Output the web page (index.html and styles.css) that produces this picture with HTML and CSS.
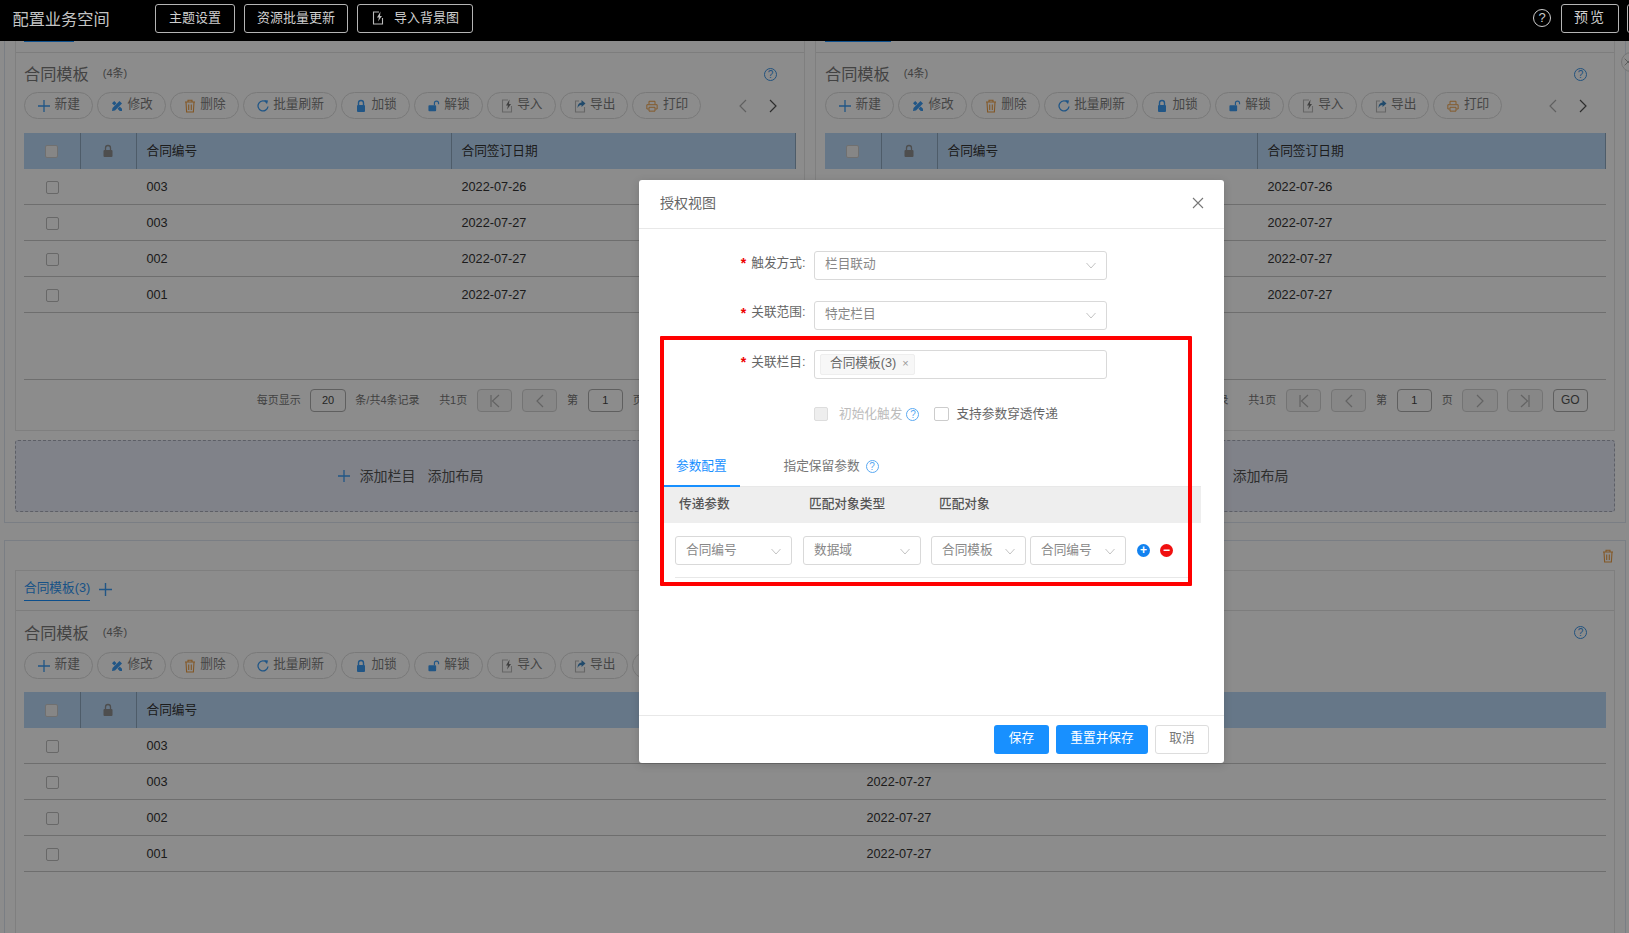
FILE: index.html
```html
<!DOCTYPE html>
<html lang="zh-CN">
<head>
<meta charset="utf-8">
<title>配置业务空间</title>
<link rel="stylesheet" href="styles.css">
</head>
<body>
<svg class="sprite" xmlns="http://www.w3.org/2000/svg">
  <symbol id="i-plus" viewBox="0 0 12 12"><path d="M6 0v12M0 6h12" fill="none" stroke="currentColor" stroke-width="1.3"/></symbol>
  <symbol id="i-edit" viewBox="0 0 12 12"><path d="M1 3.2L3.200 1l2.300 2.300-2.200 2.200zM6.500 8.700l2.200-2.200L11 8.800V11H8.800z" fill="currentColor"/><path d="M1 11l.5-3L8.500 1l2.500 2.500-7 7z" fill="currentColor"/></symbol>
  <symbol id="i-trash" viewBox="0 0 12 14"><path d="M1 3h10M4 3V1.2h4V3M2 3l.6 10h6.8L10 3M4.7 5.5v5.5M7.3 5.5v5.5" fill="none" stroke="currentColor" stroke-width="1.1"/></symbol>
  <symbol id="i-refresh" viewBox="0 0 12 14"><path d="M9.8 3.6A5 5 0 1 0 11 7.5" fill="none" stroke="currentColor" stroke-width="1.3"/><path d="M7 1l4 .6-1 3.6z" fill="currentColor"/></symbol>
  <symbol id="i-lock" viewBox="0 0 12 14"><path d="M3.5 6V4a2.5 2.5 0 0 1 5 0v2" fill="none" stroke="currentColor" stroke-width="1.4"/><rect x="2" y="6" width="8" height="7" rx="1" fill="currentColor"/></symbol>
  <symbol id="i-unlock" viewBox="0 0 14 14"><path d="M7.5 6V3.6a2.4 2.4 0 0 1 4.8 0V5" fill="none" stroke="currentColor" stroke-width="1.4"/><rect x="0.5" y="6" width="9" height="7" rx="1" fill="currentColor"/></symbol>
  <symbol id="i-import" viewBox="0 0 12 14"><path d="M7 1H1.5v12h9V7" fill="none" stroke="#bbb" stroke-width="1.1"/><path d="M8.500 .5L5 6.500h2l-1 4 4-5.500H8z" fill="#777"/></symbol>
  <symbol id="i-export" viewBox="0 0 12 14"><path d="M5 2H1.5v11h9V8" fill="none" stroke="#bbb" stroke-width="1.1"/><path d="M7.5 1l4 3.500-4 3.500V6C5.500 6 4.500 7 3.500 9c0-3.500 1.500-5.200 4-5.500z" fill="#3c87c4"/></symbol>
  <symbol id="i-print" viewBox="0 0 14 14"><path d="M3.500 5V1.500h7V5M3 10.500H1V5.500h12v5h-2M3.500 8.500h7v4.500h-7z" fill="none" stroke="currentColor" stroke-width="1.1"/></symbol>
  <symbol id="i-left" viewBox="0 0 8 14"><path d="M7 1L1 7l6 6" fill="none" stroke="currentColor" stroke-width="1.2"/></symbol>
  <symbol id="i-right" viewBox="0 0 8 14"><path d="M1 1l6 6-6 6" fill="none" stroke="currentColor" stroke-width="1.2"/></symbol>
  <symbol id="i-first" viewBox="0 0 12 14"><path d="M2 1v12M10 1L3.500 7l6.500 6" fill="none" stroke="currentColor" stroke-width="1.2"/></symbol>
  <symbol id="i-last" viewBox="0 0 12 14"><path d="M10 1v12M2 1l6.500 6L2 13" fill="none" stroke="currentColor" stroke-width="1.2"/></symbol>
  <symbol id="i-down" viewBox="0 0 10 7"><path d="M.5 1L5 6l4.500-5" fill="none" stroke="currentColor" stroke-width="1"/></symbol>
  <symbol id="i-close" viewBox="0 0 12 12"><path d="M1 1l10 10M11 1L1 11" fill="none" stroke="currentColor" stroke-width="1.1"/></symbol>
  <symbol id="i-headlock" viewBox="0 0 12 14"><path d="M3.500 6V4a2.500 2.500 0 0 1 5 0v2" fill="none" stroke="currentColor" stroke-width="1.3"/><rect x="1.500" y="6" width="9" height="7" rx="1" fill="currentColor"/></symbol>
  <symbol id="i-bolt" viewBox="0 0 12 14"><path d="M7 1H1.500v12h9V7" fill="none" stroke="currentColor" stroke-width="1.1"/><path d="M8.500 .5L5 6.500h2l-1 4 4-5.500H8z" fill="currentColor"/></symbol>
</svg>

<div class="page">
  <header class="topbar">
    <div class="brand">配置业务空间</div>
    <button class="top-btn top-btn-theme">主题设置</button>
    <button class="top-btn top-btn-res">资源批量更新</button>
    <button class="top-btn top-btn-bg"><svg class="ico-top"><use href="#i-bolt"/></svg>导入背景图</button>
    <div class="top-right">
      <span class="top-help">?</span>
      <button class="top-btn top-btn-preview">预览</button>
      <button class="top-btn top-btn-cut"></button>
    </div>
  </header>

  <main class="workspace">
    <span class="round-close"><svg class="round-close-x"><use href="#i-close"/></svg></span>
    <section class="section section-cut">
      <div class="two-panels">
        <article class="panel panel-cut">
          <div class="tabbar-cut"><span class="tab-cut tab-cut-l"></span></div>
          <div class="title-row"><span class="panel-title">合同模板</span><span class="panel-count">(4条)</span><span class="help help-panel">?</span></div>
          <div class="toolbar">
            <button class="pill"><svg class="ico c-blue"><use href="#i-plus"/></svg>新建</button>
            <button class="pill"><svg class="ico c-blue"><use href="#i-edit"/></svg>修改</button>
            <button class="pill"><svg class="ico c-orange"><use href="#i-trash"/></svg>删除</button>
            <button class="pill"><svg class="ico c-blue"><use href="#i-refresh"/></svg>批量刷新</button>
            <button class="pill"><svg class="ico c-blue"><use href="#i-lock"/></svg>加锁</button>
            <button class="pill"><svg class="ico c-blue"><use href="#i-unlock"/></svg>解锁</button>
            <button class="pill"><svg class="ico"><use href="#i-import"/></svg>导入</button>
            <button class="pill"><svg class="ico"><use href="#i-export"/></svg>导出</button>
            <button class="pill"><svg class="ico c-orange"><use href="#i-print"/></svg>打印</button>
            <div class="tool-arrows"><svg class="arrow arrow-off"><use href="#i-left"/></svg><svg class="arrow"><use href="#i-right"/></svg></div>
          </div>
          <div class="grid-table grid-l">
            <div class="t-row t-head"><div class="t-cell t-center"><span class="check check-head"></span></div><div class="t-cell t-center"><svg class="ico-headlock"><use href="#i-headlock"/></svg></div><div class="t-cell t-text">合同编号</div><div class="t-cell t-text">合同签订日期</div></div>
            <div class="t-body">
              <div class="t-row"><div class="t-center"><span class="check"></span></div><div></div><div class="t-text">003</div><div class="t-text">2022-07-26</div></div>
              <div class="t-row"><div class="t-center"><span class="check"></span></div><div></div><div class="t-text">003</div><div class="t-text">2022-07-27</div></div>
              <div class="t-row"><div class="t-center"><span class="check"></span></div><div></div><div class="t-text">002</div><div class="t-text">2022-07-27</div></div>
              <div class="t-row"><div class="t-center"><span class="check"></span></div><div></div><div class="t-text">001</div><div class="t-text">2022-07-27</div></div>
            </div>
          </div>
          <div class="pager pager-l">
            <span>每页显示</span><span class="pg-input">20</span><span>条/共4条记录</span><span class="pg-total">共1页</span>
            <span class="pg-btn"><svg class="pg-ico"><use href="#i-first"/></svg></span><span class="pg-btn"><svg class="pg-ico"><use href="#i-left"/></svg></span>
            <span>第</span><span class="pg-input">1</span><span>页</span>
            <span class="pg-btn"><svg class="pg-ico"><use href="#i-right"/></svg></span><span class="pg-btn"><svg class="pg-ico"><use href="#i-last"/></svg></span><span class="pg-go">GO</span>
          </div>
        </article>

        <article class="panel panel-cut panel-r">
          <div class="tabbar-cut"><span class="tab-cut tab-cut-r"></span></div>
          <div class="title-row"><span class="panel-title">合同模板</span><span class="panel-count">(4条)</span><span class="help help-panel">?</span></div>
          <div class="toolbar">
            <button class="pill"><svg class="ico c-blue"><use href="#i-plus"/></svg>新建</button>
            <button class="pill"><svg class="ico c-blue"><use href="#i-edit"/></svg>修改</button>
            <button class="pill"><svg class="ico c-orange"><use href="#i-trash"/></svg>删除</button>
            <button class="pill"><svg class="ico c-blue"><use href="#i-refresh"/></svg>批量刷新</button>
            <button class="pill"><svg class="ico c-blue"><use href="#i-lock"/></svg>加锁</button>
            <button class="pill"><svg class="ico c-blue"><use href="#i-unlock"/></svg>解锁</button>
            <button class="pill"><svg class="ico"><use href="#i-import"/></svg>导入</button>
            <button class="pill"><svg class="ico"><use href="#i-export"/></svg>导出</button>
            <button class="pill"><svg class="ico c-orange"><use href="#i-print"/></svg>打印</button>
            <div class="tool-arrows"><svg class="arrow arrow-off"><use href="#i-left"/></svg><svg class="arrow"><use href="#i-right"/></svg></div>
          </div>
          <div class="grid-table grid-r">
            <div class="t-row t-head"><div class="t-cell t-center"><span class="check check-head"></span></div><div class="t-cell t-center"><svg class="ico-headlock"><use href="#i-headlock"/></svg></div><div class="t-cell t-text">合同编号</div><div class="t-cell t-text">合同签订日期</div></div>
            <div class="t-body">
              <div class="t-row"><div class="t-center"><span class="check"></span></div><div></div><div class="t-text">003</div><div class="t-text">2022-07-26</div></div>
              <div class="t-row"><div class="t-center"><span class="check"></span></div><div></div><div class="t-text">003</div><div class="t-text">2022-07-27</div></div>
              <div class="t-row"><div class="t-center"><span class="check"></span></div><div></div><div class="t-text">002</div><div class="t-text">2022-07-27</div></div>
              <div class="t-row"><div class="t-center"><span class="check"></span></div><div></div><div class="t-text">001</div><div class="t-text">2022-07-27</div></div>
            </div>
          </div>
          <div class="pager pager-r">
            <span>每页显示</span><span class="pg-input">20</span><span>条/共4条记录</span><span class="pg-total">共1页</span>
            <span class="pg-btn"><svg class="pg-ico"><use href="#i-first"/></svg></span><span class="pg-btn"><svg class="pg-ico"><use href="#i-left"/></svg></span>
            <span>第</span><span class="pg-input">1</span><span>页</span>
            <span class="pg-btn"><svg class="pg-ico"><use href="#i-right"/></svg></span><span class="pg-btn"><svg class="pg-ico"><use href="#i-last"/></svg></span><span class="pg-go">GO</span>
          </div>
        </article>
      </div>
      <div class="add-zone">
        <div class="add-cell"><svg class="add-plus c-blue"><use href="#i-plus"/></svg><span>添加栏目</span><span>添加布局</span></div>
        <div class="add-cell"><svg class="add-plus c-blue"><use href="#i-plus"/></svg><span>添加栏目</span><span>添加布局</span></div>
      </div>
    </section>

    <section class="section section-second">
      <div class="section-head"><svg class="ico-section c-orange"><use href="#i-trash"/></svg></div>
      <article class="panel panel-b">
        <div class="tabbar"><span class="tab-on">合同模板(3)</span><svg class="tab-add c-blue"><use href="#i-plus"/></svg></div>
        <div class="title-row"><span class="panel-title">合同模板</span><span class="panel-count">(4条)</span><span class="help help-panel">?</span></div>
        <div class="toolbar">
          <button class="pill"><svg class="ico c-blue"><use href="#i-plus"/></svg>新建</button>
          <button class="pill"><svg class="ico c-blue"><use href="#i-edit"/></svg>修改</button>
          <button class="pill"><svg class="ico c-orange"><use href="#i-trash"/></svg>删除</button>
          <button class="pill"><svg class="ico c-blue"><use href="#i-refresh"/></svg>批量刷新</button>
          <button class="pill"><svg class="ico c-blue"><use href="#i-lock"/></svg>加锁</button>
          <button class="pill"><svg class="ico c-blue"><use href="#i-unlock"/></svg>解锁</button>
          <button class="pill"><svg class="ico"><use href="#i-import"/></svg>导入</button>
          <button class="pill"><svg class="ico"><use href="#i-export"/></svg>导出</button>
          <button class="pill"><svg class="ico c-orange"><use href="#i-print"/></svg>打印</button>
        </div>
        <div class="grid-table grid-b">
          <div class="t-row t-head"><div class="t-cell t-center"><span class="check check-head"></span></div><div class="t-cell t-center"><svg class="ico-headlock"><use href="#i-headlock"/></svg></div><div class="t-cell t-text">合同编号</div><div class="t-text">合同签订日期</div></div>
          <div class="t-body">
            <div class="t-row"><div class="t-center"><span class="check"></span></div><div></div><div class="t-text">003</div><div class="t-text">2022-07-26</div></div>
            <div class="t-row"><div class="t-center"><span class="check"></span></div><div></div><div class="t-text">003</div><div class="t-text">2022-07-27</div></div>
            <div class="t-row"><div class="t-center"><span class="check"></span></div><div></div><div class="t-text">002</div><div class="t-text">2022-07-27</div></div>
            <div class="t-row"><div class="t-center"><span class="check"></span></div><div></div><div class="t-text">001</div><div class="t-text">2022-07-27</div></div>
          </div>
        </div>
      </article>
    </section>
  </main>

  <div class="mask">
    <div class="dialog">
      <div class="dlg-head"><span>授权视图</span><svg class="dlg-close"><use href="#i-close"/></svg></div>
      <div class="dlg-body">
        <div class="form-row">
          <label class="form-label"><i class="star">*</i>触发方式<b class="colon">:</b></label>
          <div class="select select-wide"><span>栏目联动</span><svg class="chev"><use href="#i-down"/></svg></div>
        </div>
        <div class="form-row">
          <label class="form-label"><i class="star">*</i>关联范围<b class="colon">:</b></label>
          <div class="select select-wide"><span>特定栏目</span><svg class="chev"><use href="#i-down"/></svg></div>
        </div>
        <div class="form-row form-row-last">
          <label class="form-label"><i class="star">*</i>关联栏目<b class="colon">:</b></label>
          <div class="select select-wide select-tags"><span class="tag">合同模板(3)<em class="tag-x">×</em></span></div>
        </div>
        <div class="check-row">
          <span class="box box-off"></span><span class="check-off">初始化触发</span><span class="help help-dlg">?</span>
          <span class="box box-second"></span><span class="check-on">支持参数穿透传递</span>
        </div>
        <div class="dlg-tabs">
          <span class="dlg-tab dlg-tab-on">参数配置</span>
          <span class="dlg-tab dlg-tab-2">指定保留参数</span><span class="help help-dlg">?</span>
        </div>
        <div class="map-head"><span>传递参数</span><span>匹配对象类型</span><span>匹配对象</span></div>
        <div class="map-row">
          <div class="select s-a"><span>合同编号</span><svg class="chev"><use href="#i-down"/></svg></div>
          <div class="select s-b"><span>数据域</span><svg class="chev"><use href="#i-down"/></svg></div>
          <div class="select s-c"><span>合同模板</span><svg class="chev"><use href="#i-down"/></svg></div>
          <div class="select s-d"><span>合同编号</span><svg class="chev"><use href="#i-down"/></svg></div>
          <span class="round round-add">+</span>
          <span class="round round-del">−</span>
        </div>
      </div>
      <div class="dlg-foot">
        <button class="btn btn-primary btn-save">保存</button>
        <button class="btn btn-primary btn-reset">重置并保存</button>
        <button class="btn btn-cancel">取消</button>
      </div>
      <div class="red-mark"></div>
    </div>
  </div>
</div>
</body>
</html>
```

FILE: styles.css
```css
* { box-sizing: border-box; }
html, body { margin: 0; padding: 0; height: 100%; background: #fff; overflow: hidden; }
body { font: 12.7px/1.2 "Liberation Sans", "Noto Sans CJK SC", sans-serif; color: #666; }
button { font: inherit; cursor: pointer; background: none; padding: 0; }
i, em, b { font-style: normal; font-weight: normal; }
.sprite { position: absolute; width: 0; height: 0; overflow: hidden; }

.page { position: relative; width: 1629px; height: 933px; overflow: hidden; }

/* top bar */
.topbar { display: flex; align-items: flex-start; height: 41px; background: #000; color: #d0d0d0; position: relative; z-index: 3; overflow: hidden; font-size: 13px; }
.brand { font-size: 16.2px; line-height: 20px; margin: 9px 0 0 12.5px; width: 142.5px; color: #c4c4c4; }
.top-btn { height: 29px; margin-top: 4px; border: 1px solid #b4b4b4; border-radius: 3px; color: #cfcfcf; line-height: 25px; display: flex; align-items: flex-start; justify-content: center; }
.top-btn-theme { width: 80px; }
.top-btn-res { width: 104px; margin-left: 9px; }
.top-btn-bg { width: 116px; margin-left: 9px; padding-left: 1px; }
.ico-top { width: 12px; height: 14px; margin: 6px 10px 0 0; color: #bbb; }
.top-right { display: flex; align-items: flex-start; margin-left: auto; margin-right: -40px; }
.top-help { width: 18px; height: 18px; margin: 9px 10px 0 0; border: 1px solid #ccc; border-radius: 50%; font-size: 13px; line-height: 16px; text-align: center; color: #ccc; }
.top-btn-preview { width: 58px; letter-spacing: 2px; font-size: 14px; }
.top-btn-cut { width: 42px; margin-left: 8px; }

/* workspace */
.workspace { position: relative; height: 892px; padding: 0 3px 0 4px; overflow: hidden; }
.round-close { position: absolute; left: 1621px; top: 11px; width: 20px; height: 20px; border: 1px solid #d4d4d4; border-radius: 50%; background: #fff; display: block; padding: 5px 0 0 2px; color: #888; }
.round-close-x { display: block; width: 8px; height: 8px; }
.section { border: 1px solid #dfe6f0; padding: 0 10px 10px; }
.section-cut { border-top: 0; }
.section-second { margin-top: 17px; }
.section-head { height: 29px; display: flex; justify-content: flex-end; align-items: center; padding-right: 1px; }
.ico-section { width: 12px; height: 14px; }
.two-panels { display: grid; grid-template-columns: 790px 800px; column-gap: 10px; }

.panel { border: 1px solid #e8e8e8; padding: 0 8px; }
.panel-cut { border-top: 0; padding-bottom: 18px; }
.panel-r { padding-left: 9px; }
.panel-b { height: 500px; }
.tabbar-cut { height: 12px; margin: 0 -8px; padding-left: 8px; border-bottom: 1px solid #e4e4e4; }
.panel-r .tabbar-cut { margin-left: -9px; padding-left: 9px; }
.tab-cut { display: block; height: 1px; background: #1890ff; }
.tab-cut-l { width: 50px; }
.tab-cut-r { width: 66px; }
.tabbar { display: flex; align-items: flex-start; height: 40px; margin: 0 -8px; padding-left: 8px; border-bottom: 1px solid #e4e4e4; }
.tab-on { height: 30px; line-height: 35px; color: #2e96f5; border-bottom: 1px solid #1890ff; }
.tab-add { width: 13px; height: 13px; margin: 12px 0 0 9px; }

.title-row { display: flex; align-items: center; height: 39px; padding-top: 3px; color: #777; }
.panel-b .title-row { height: 41px; padding-top: 2px; }
.panel-title { font-size: 16.2px; line-height: 20px; color: #7a7a7a; }
.panel-count { font-size: 11px; margin-left: 14px; color: #777; }
.help { display: inline-block; border-radius: 50%; text-align: center; border: 1px solid #3d95e6; color: #3d95e6; }
.help-panel { width: 13px; height: 13px; font-size: 10px; line-height: 11px; margin-left: auto; margin-right: 19px; }

.c-blue { color: #3d9df5; }
.c-orange { color: #ef9f45; }
.toolbar { display: flex; gap: 4px; height: 27px; margin-bottom: 14px; }
.panel-b .toolbar { margin-bottom: 13px; }
.pill { flex: none; height: 27px; padding: 0 12px 2px 13px; border: 1px solid #dcdcdc; border-radius: 14px; background: transparent; color: #7f7f7f; display: flex; align-items: center; gap: 4.5px; white-space: nowrap; }
.ico { width: 12px; height: 14px; flex: none; position: relative; top: 1px; }
.tool-arrows { margin-left: auto; margin-right: 19px; display: flex; align-items: center; gap: 22px; }
.arrow { width: 8px; height: 14px; color: #555; }
.arrow-off { color: #b0b0b0; }

.grid-table { --cols: 57px 56px 315px 1fr; }
.grid-r { --cols: 57px 56px 320px 1fr; }
.grid-b { --cols: 57px 56px 720px 1fr; }
.t-row { display: grid; grid-template-columns: var(--cols); align-items: center; height: 36px; border-bottom: 1px solid #c8c8c8; color: #333; }
.t-head { background: #bbd9f7; border-bottom: 0; }
.t-cell { height: 100%; display: flex; align-items: center; border-right: 1px solid #8fa8c0; }
.t-head .t-cell:last-child { border-right: 1px solid #8fa8c0; }
.t-center { display: flex; justify-content: center; align-items: center; }
.t-text { padding: 2px 0 0 9.5px; }
.t-body { height: 211px; border-bottom: 1px solid #c8c8c8; }
.grid-b .t-body { height: auto; border-bottom: 0; }
.check { display: block; width: 13px; height: 13px; border: 1px solid #bdbdbd; border-radius: 2px; background: transparent; margin: 1px 1px 0 0; }
.check-head { background: #f4f4f4; border-color: #ccc; margin-top: 0; }
.ico-headlock { width: 12px; height: 14px; color: #8e8e8e; margin-right: 1px; }

.pager { display: flex; justify-content: flex-end; align-items: center; gap: 9.6px; height: 23px; margin-top: 9px; font-size: 11px; color: #777; }
.pager-l { padding-right: 17px; }
.pager-r { padding-right: 18px; }
.pg-total { margin-left: 10px; }
.pg-input, .pg-btn, .pg-go { width: 35.5px; height: 23px; border-radius: 4px; display: flex; align-items: center; justify-content: center; }
.pg-input { border: 1px solid #adadad; color: #444; }
.pg-btn { border: 1px solid #d4d4d4; background: #f6f6f6; color: #b4b4b4; }
.pg-go { border: 1px solid #adadad; font-size: 12px; color: #555; }
.pg-ico { width: 12px; height: 14px; }

.add-zone { display: grid; grid-template-columns: 789px 1fr; margin-top: 9px; height: 72px; border: 1px dashed #a9adbb; border-radius: 3px; background: #e9edfa; }
.add-cell { display: flex; justify-content: center; align-items: center; gap: 12px; font-size: 14px; color: #555; }
.add-cell + .add-cell { padding-left: 12px; }
.add-plus { width: 12px; height: 12px; margin-right: -2px; }

/* modal */
.mask { position: absolute; left: 0; right: 0; top: 41px; bottom: 0; background: rgba(0, 0, 0, .45); z-index: 5; }
.dialog { position: absolute; left: 639px; top: 139px; width: 585px; height: 583px; display: flex; flex-direction: column; background: #fff; border-radius: 3px; box-shadow: 0 2px 8px rgba(0, 0, 0, .15); }
.dlg-head { flex: none; height: 49px; display: flex; align-items: center; justify-content: space-between; padding: 0 20px 2px 21px; border-bottom: 1px solid #e8e8e8; font-size: 14px; color: #666; }
.dlg-close { width: 12px; height: 12px; color: #777; }
.dlg-body { flex: 1; padding: 22px 23px 0 25px; }

.form-row { display: flex; margin: 0 0 20.5px -25px; height: 29px; }
.form-row-last { margin-bottom: 28px; }
.form-label { width: 167px; display: flex; justify-content: flex-end; align-items: center; height: 25px; color: #666; white-space: nowrap; }
.star { color: #e00; margin-right: 5px; font-size: 14px; font-weight: bold; }
.colon { width: 4px; }
.select { display: flex; align-items: center; justify-content: space-between; height: 29px; padding: 0 10px 1px 10px; border: 1px solid #d9d9d9; border-radius: 3px; color: #888; flex: none; }
.select-wide { width: 293px; margin-left: 8px; }
.select-tags { justify-content: flex-start; padding: 0 5px; }
.tag { display: flex; align-items: center; height: 21px; padding: 0 3px 2px 9px; background: #f7f7f7; border: 1px solid #eee; border-radius: 2px; color: #666; gap: 4px; }
.tag-x { font-size: 11px; color: #999; padding: 0 2px; }
.chev { width: 10px; height: 7px; color: #c4c4c4; margin-top: 1px; flex: none; }

.check-row { display: flex; align-items: center; height: 14px; margin-left: 150px; }
.box { flex: none; width: 14px; height: 14px; border: 1px solid #ccc; border-radius: 2px; }
.box-off { background: #eee; border-color: #ddd; margin-right: 11px; }
.box-second { margin-left: 15px; margin-right: 7px; width: 15px; }
.check-off { color: #bcbcbc; margin-right: 4px; padding-top: 2px; }
.check-on { color: #666; padding-top: 2px; }
.help-dlg { width: 13px; height: 13px; font-size: 10px; line-height: 11px; border-color: #5aa9f2; color: #5aa9f2; }

.dlg-tabs { display: flex; align-items: center; height: 46px; margin-top: 20px; padding-top: 4px; border-bottom: 1px solid #e8e8e8; position: relative; }
.dlg-tab { display: block; line-height: 42px; height: 42px; }
.dlg-tab-on { width: 76px; padding-left: 12px; color: #1890ff; border-bottom: 2px solid #1890ff; margin-bottom: -1px; align-self: flex-end; }
.dlg-tab-2 { margin-left: 43.5px; margin-right: 6px; color: #777; }
.dlg-tabs .help-dlg { position: relative; top: 1px; }
.map-head { display: grid; grid-template-columns: 130px 130px 1fr; height: 36px; align-items: center; padding-left: 15px; background: #eee; color: #555; font-weight: 500; }
.map-row { display: flex; align-items: center; width: 513px; margin: 13px 0 0 11px; padding-bottom: 12px; border-bottom: 1px solid #e8e8e8; }
.map-row .select { padding-bottom: 0; }
.s-a { width: 117px; }
.s-b { width: 118px; margin-left: 11px; }
.s-c { width: 95px; margin-left: 10px; }
.s-d { width: 96px; margin-left: 4px; }
.round { flex: none; width: 13px; height: 13px; border-radius: 50%; color: #fff; text-align: center; font-size: 12px; line-height: 12px; font-weight: bold; }
.round-add { margin-left: 11px; background: #1282f0; }
.round-del { margin-left: 10px; background: #f01010; }

.dlg-foot { flex: none; height: 48px; display: flex; justify-content: flex-end; gap: 7px; padding: 9px 15px 0 0; border-top: 1px solid #e8e8e8; }
.btn { height: 29px; border-radius: 3px; border: 1px solid transparent; padding-bottom: 2px; }
.btn-primary { background: #1890ff; color: #fff; }
.btn-save { width: 55px; }
.btn-reset { width: 92px; }
.btn-cancel { width: 54px; border-color: #ddd; background: #fff; color: #777; }

.red-mark { position: absolute; left: 21px; top: 156px; width: 532px; height: 250px; border: 4px solid #f00; border-radius: 1px; pointer-events: none; }
```
